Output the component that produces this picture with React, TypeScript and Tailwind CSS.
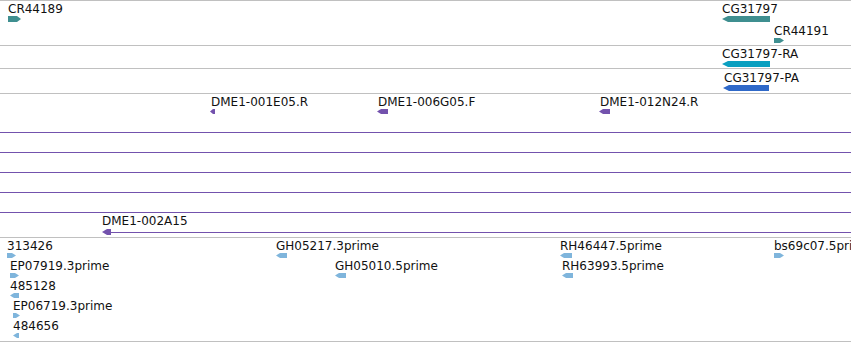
import React from "react";

type Dir = "l" | "r";

const TEAL = "#3f8f90";
const CYAN = "#0a9fc0";
const BLUE = "#2f69c9";
const PURPLE = "#7352ad";
const EST = "#7fb5dc";

function Arrow({ w, h, dir, tip, color }: { w: number; h: number; dir: Dir; tip: number; color: string }) {
  const pts =
    dir === "l"
      ? `0,${h / 2} ${tip},0 ${w},0 ${w},${h} ${tip},${h}`
      : `0,0 ${w - tip},0 ${w},${h / 2} ${w - tip},${h} 0,${h}`;
  return (
    <svg className="block shrink-0" width={w} height={h} viewBox={`0 0 ${w} ${h}`}>
      <polygon points={pts} fill={color} />
    </svg>
  );
}

type Feat = { x: number; text: string; w: number; h?: number; dir: Dir; tip?: number; color: string; dx?: number };

// A feature placed on the genome canvas: its left edge is its coordinate.
function Feature({ f }: { f: Feat }) {
  return (
    <div className="absolute top-0 flex flex-col items-start" style={{ left: f.x }}>
      <span className="whitespace-nowrap text-[12px] leading-[14px] text-[#111]" style={{ marginLeft: f.dx ?? 0 }}>
        {f.text}
      </span>
      <Arrow w={f.w} h={f.h ?? 5} dir={f.dir} tip={f.tip ?? 4} color={f.color} />
    </div>
  );
}

function Row({ feats, cls }: { feats: Feat[]; cls: string }) {
  return (
    <div className={`relative ${cls}`}>
      <div className="relative h-full">
        {feats.map((f) => (
          <Feature key={f.text} f={f} />
        ))}
      </div>
    </div>
  );
}

const estRows: Feat[][] = [
  [
    { x: 7, text: "313426", w: 9, dir: "r", color: EST },
    { x: 276, text: "GH05217.3prime", w: 11, dir: "l", color: EST },
    { x: 560, text: "RH46447.5prime", w: 12, dir: "l", color: EST },
    { x: 774, text: "bs69c07.5prime", w: 10, dir: "r", color: EST },
  ],
  [
    { x: 10, text: "EP07919.3prime", w: 9, dir: "r", color: EST },
    { x: 335, text: "GH05010.5prime", w: 11, dir: "l", color: EST },
    { x: 562, text: "RH63993.5prime", w: 11, dir: "l", color: EST },
  ],
  [{ x: 10, text: "485128", w: 9, dir: "l", color: EST }],
  [{ x: 13, text: "EP06719.3prime", w: 7, dir: "r", color: EST }],
  [{ x: 13, text: "484656", w: 6, dir: "l", color: EST }],
];

export default function App() {
  return (
    <div
      className="w-[851px] h-[342px] overflow-hidden bg-white border-t border-[#c0c0c0] flex flex-col"
      style={{ fontFamily: '"DejaVu Sans", Verdana, sans-serif' }}
    >
      {/* Gene track */}
      <div className="h-[45px] shrink-0 border-b border-[#c0c0c0] flex flex-col pt-px">
        <Row
          cls="h-[22px]"
          feats={[
            { x: 8, text: "CR44189", w: 13, h: 6, dir: "r", color: TEAL },
            { x: 722, text: "CG31797", w: 48, h: 6, dir: "l", tip: 6, color: TEAL },
          ]}
        />
        <Row cls="h-[21px]" feats={[{ x: 774, text: "CR44191", w: 10, dir: "r", color: TEAL }]} />
      </div>
      {/* Transcript track */}
      <div className="h-[23px] shrink-0 border-b border-[#c0c0c0] pt-px">
        <Row cls="h-full" feats={[{ x: 722, text: "CG31797-RA", w: 48, h: 6, dir: "l", tip: 6, color: CYAN }]} />
      </div>
      {/* Protein track */}
      <div className="h-[25px] shrink-0 border-b border-[#c0c0c0] pt-[2px]">
        <Row cls="h-full" feats={[{ x: 723, text: "CG31797-PA", w: 46, h: 6, dir: "l", tip: 6, color: BLUE, dx: 1 }]} />
      </div>
      {/* BAC end track */}
      <div className="h-[144px] shrink-0 border-b border-[#c0c0c0] flex flex-col">
        <Row
          cls="h-[38px] pt-px"
          feats={[
            { x: 210, text: "DME1-001E05.R", w: 5, dir: "l", tip: 3, color: PURPLE, dx: 1 },
            { x: 377, text: "DME1-006G05.F", w: 11, dir: "l", color: PURPLE, dx: 1 },
            { x: 599, text: "DME1-012N24.R", w: 11, dir: "l", color: PURPLE, dx: 1 },
          ]}
        />
        <div className="h-[20px] shrink-0 border-t border-[#7352ad]" />
        <div className="h-[20px] shrink-0 border-t border-[#7352ad]" />
        <div className="h-[20px] shrink-0 border-t border-[#7352ad]" />
        <div className="h-[20px] shrink-0 border-t border-[#7352ad]" />
        <div className="flex-1 border-t border-[#7352ad] pt-px pl-[102px] flex flex-col items-start">
          <span className="whitespace-nowrap text-[12px] leading-[14px] text-[#111]">DME1-002A15</span>
          <div className="mt-px flex items-center w-full">
            <Arrow w={9} h={6} dir="l" tip={5} color={PURPLE} />
            <div className="flex-1 h-px bg-[#7352ad]" />
          </div>
        </div>
      </div>
      {/* EST track */}
      <div className="flex-1 border-b border-[#c0c0c0] flex flex-col pt-px">
        {estRows.map((r, i) => (
          <Row key={i} cls="h-[20px] shrink-0" feats={r} />
        ))}
      </div>
    </div>
  );
}
